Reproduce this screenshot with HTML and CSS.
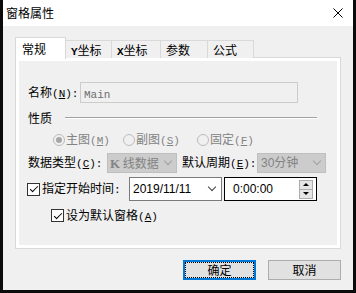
FILE: index.html
```html
<!DOCTYPE html>
<html lang="zh-CN">
<head>
    <meta charset="UTF-8">
    <title>窗格属性</title>
    <link rel="stylesheet" href="styles.css">
</head>
<body>
    <div class="window">
        <div class="titlebar">
            <span class="title">窗格属性</span>
            <svg class="close" width="10" height="10" viewBox="0 0 10 10">
                <path d="M0.5 0.5 L9.5 9.5 M9.5 0.5 L0.5 9.5" stroke="#000" stroke-width="1" fill="none"/>
            </svg>
        </div>
        <div class="content">
            <div class="tabs">
                <div class="tab active">常规</div>
                <div class="tab"><span class="en">Y</span>坐标</div>
                <div class="tab"><span class="en">X</span>坐标</div>
                <div class="tab">参数</div>
                <div class="tab">公式</div>
            </div>
            <div class="panel">
                <div class="page">
                    <div class="row name-row">
                        <span class="label name-label">名称<span class="en">(<u>N</u>):</span></span>
                        <div class="edit disabled"><span class="en">Main</span></div>
                    </div>
                    <div class="row group-row">
                        <span class="label">性质</span>
                        <span class="group-line"></span>
                    </div>
                    <div class="row radio-row">
                        <label class="radio-item w1"><span class="radio checked"></span><span>主图<span class="en">(<u>M</u>)</span></span></label>
                        <label class="radio-item w2"><span class="radio"></span><span>副图<span class="en">(<u>S</u>)</span></span></label>
                        <label class="radio-item"><span class="radio"></span><span>固定<span class="en">(<u>F</u>)</span></span></label>
                    </div>
                    <div class="row combo-row">
                        <span class="label type-label">数据类型<span class="en">(<u>C</u>):</span></span>
                        <div class="combo type-combo"><span><b class="k">K</b> 线数据</span><span class="chev"></span></div>
                        <span class="label period-label">默认周期<span class="en">(<u>E</u>):</span></span>
                        <div class="combo period-combo"><span class="num">30分钟</span><span class="chev"></span></div>
                    </div>
                    <div class="row time-row">
                        <span class="check checked"></span>
                        <span class="label time-label">指定开始时间<span class="en">:</span></span>
                        <div class="picker">
                            <span class="num">2019/11/11</span>
                            <span class="chev dark"></span>
                        </div>
                        <div class="picker timebox">
                            <span class="num">0:00:00</span>
                            <div class="spin">
                                <span class="spin-btn"><i class="tri up"></i></span>
                                <span class="spin-btn"><i class="tri down"></i></span>
                            </div>
                        </div>
                    </div>
                    <div class="row default-row">
                        <span class="check checked"></span>
                        <span class="label">设为默认窗格<span class="en">(<u>A</u>)</span></span>
                    </div>
                </div>
            </div>
            <div class="actions">
                <button class="btn focused">确定</button>
                <button class="btn">取消</button>
            </div>
        </div>
    </div>
</body>
</html>
```

FILE: styles.css
```css
body {
    margin: 0;
    background-color: #0b0b0b;
    font-family: "Noto Sans CJK SC", sans-serif;
    font-size: 12px;
    line-height: 14px;
    color: #000;
    overflow: hidden;
}

/* latin parts are half width, like the dialog's bitmap font */
.en {
    font-family: "Liberation Mono", monospace;
    font-size: 11px;
}

.window {
    margin-left: 3px;
    width: 350px;
    height: 290px;
    background-color: #f0f0f0;
}

.titlebar {
    height: 26px;
    background-color: #fff;
    display: flex;
    align-items: center;
    justify-content: space-between;
    padding: 0 10px 0 3px;
}

.close {
    display: block;
}

.content {
    padding: 11px 12px 0 12px;
}

/* tabs */
.tabs {
    display: flex;
    align-items: flex-end;
    height: 21px;
}

.tab {
    box-sizing: border-box;
    height: 18px;
    border: 1px solid #d9d9d9;
    border-bottom: none;
    margin-left: -1px;
    padding: 2px 0 0 5px;
    background-color: #f0f0f0;
    white-space: nowrap;
}

.tab .en {
    font-weight: bold;
}

.tab:nth-child(2) { width: 47px; }
.tab:nth-child(3) { width: 50px; }
.tab:nth-child(4) { width: 48px; }
.tab:nth-child(5) { width: 47px; }

.tab.active {
    position: relative;
    z-index: 1;
    width: 51px;
    height: 22px;
    margin-left: 0;
    margin-bottom: -1px;
    padding: 4px 0 0 6px;
    background-color: #fff;
}

.panel {
    box-sizing: border-box;
    height: 192px;
    margin-top: -1px;
    border: 1px solid #d9d9d9;
    background-color: #fff;
    padding: 3px;
}

.page {
    height: 100%;
    background-color: #f0f0f0;
    padding: 21px 0 0 9px;
    box-sizing: border-box;
}

.row {
    display: flex;
    align-items: center;
}

.label {
    white-space: nowrap;
    flex-shrink: 0;
}

/* name */
.name-row {
    height: 21px;
}

.name-label {
    width: 52px;
}

.edit {
    box-sizing: border-box;
    width: 218px;
    height: 21px;
    border: 1px solid #cccccc;
    padding: 3px 0 0 3px;
    color: #6d6d6d;
}

/* group header */
.group-row {
    height: 13px;
    margin-top: 8px;
}

.group-line {
    width: 252px;
    margin-left: 13px;
    border-top: 1px solid #a0a0a0;
    border-bottom: 1px solid #fff;
}

/* radios */
.radio-row {
    height: 16px;
    margin-top: 8px;
    padding-left: 25px;
    color: #838383;
}

.radio-item {
    display: flex;
    align-items: center;
    white-space: nowrap;
}

.radio-item.w1 { width: 70px; }
.radio-item.w2 { width: 74px; }

.radio {
    box-sizing: border-box;
    width: 12px;
    height: 12px;
    margin-right: 1px;
    border: 1px solid #bcbcbc;
    border-radius: 50%;
    background-color: #f0f0f0;
    display: flex;
    align-items: center;
    justify-content: center;
}

.radio.checked::after {
    content: "";
    width: 6px;
    height: 6px;
    border-radius: 50%;
    background-color: #a6a6a6;
}

/* combos */
.combo-row {
    height: 20px;
    margin-top: 5px;
}

.type-label { width: 79px; }
.period-label { width: 75px; margin-left: 5px; }

.combo {
    box-sizing: border-box;
    height: 20px;
    border: 1px solid #bfbfbf;
    background-color: #cccccc;
    color: #838383;
    display: flex;
    align-items: center;
    justify-content: space-between;
    padding: 0 5px 0 2px;
    white-space: nowrap;
}

.type-combo { width: 70px; }
.period-combo { width: 69px; padding-left: 3px; }

.k {
    font-family: "Liberation Serif", serif;
    font-size: 13px;
}

.num {
    font-family: "Liberation Sans", "Noto Sans CJK SC", sans-serif;
}

.chev {
    width: 5px;
    height: 5px;
    border-right: 1px solid #a0a0a0;
    border-bottom: 1px solid #a0a0a0;
    transform: translateY(-2px) rotate(45deg);
}

.chev.dark {
    border-color: #404040;
}

/* time */
.time-row {
    height: 24px;
    margin-top: 4px;
}

.check {
    box-sizing: border-box;
    width: 13px;
    height: 13px;
    border: 1px solid #333;
    background-color: #fff;
    flex-shrink: 0;
    display: flex;
    align-items: center;
    justify-content: center;
}

.check.checked::after {
    content: "";
    width: 7px;
    height: 3px;
    border-left: 1px solid #000;
    border-bottom: 1px solid #000;
    transform: translate(0, -1px) rotate(-45deg);
}

.time-row .check {
    margin-left: -1px;
    margin-right: 2px;
}

.time-label {
    width: 87px;
}

.picker {
    box-sizing: border-box;
    width: 93px;
    height: 24px;
    border: 1px solid #7a7a7a;
    background-color: #fff;
    display: flex;
    align-items: center;
    justify-content: space-between;
    padding: 0 6px 0 3px;
}

.timebox {
    margin-left: 2px;
    border-color: #000;
    padding: 0 3px 0 8px;
}

.spin {
    display: flex;
    flex-direction: column;
    width: 14px;
    height: 19px;
}

.spin-btn {
    flex: 1;
    border: 1px solid #adadad;
    background-color: #e5e5e5;
    display: flex;
    align-items: center;
    justify-content: center;
}

.spin-btn + .spin-btn {
    border-top: none;
}

.tri {
    width: 0;
    height: 0;
    border-left: 3px solid transparent;
    border-right: 3px solid transparent;
}

.tri.up { border-bottom: 3px solid #000; }
.tri.down { border-top: 3px solid #000; }

/* default pane */
.default-row {
    height: 15px;
    margin-top: 7px;
    padding-left: 23px;
}

.default-row .check {
    margin-right: 2px;
}

/* buttons */
.actions {
    display: flex;
    justify-content: flex-end;
    gap: 12px;
    margin-top: 11px;
}

.btn {
    box-sizing: border-box;
    width: 73px;
    height: 20px;
    padding: 0;
    border: 1px solid #adadad;
    background-color: #e1e1e1;
    font-family: "Noto Sans CJK SC", sans-serif;
    font-size: 12px;
    line-height: 14px;
    color: #000;
}

.btn.focused {
    border-color: #0078d7;
    box-shadow: inset 0 0 0 1px #0078d7;
    outline: 1px dotted #000;
    outline-offset: -3px;
}
```
